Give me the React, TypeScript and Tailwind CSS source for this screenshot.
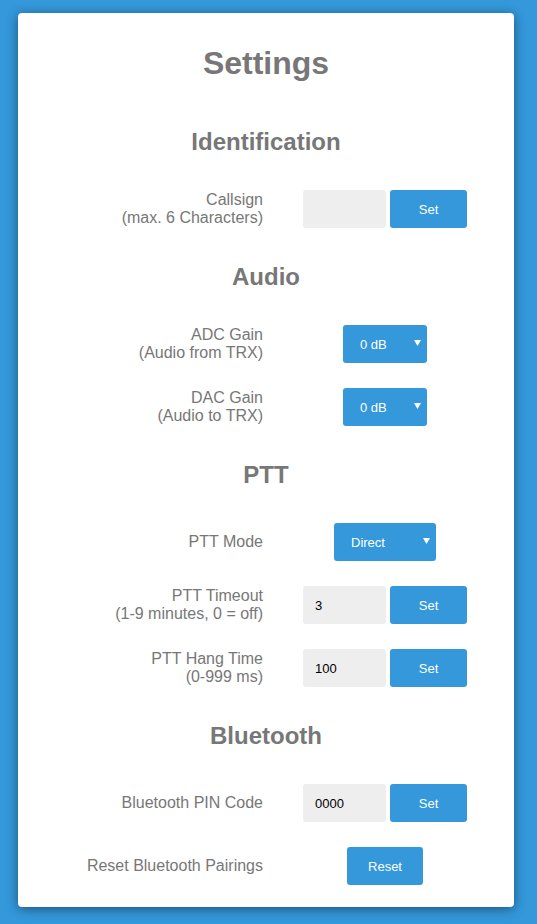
import React from "react";

const font = { fontFamily: '"Liberation Sans", Arial, sans-serif' };

function Label({ lines }: { lines: string[] }) {
  return (
    <div className="w-[245px] text-right text-[16px] leading-[18px] text-[#777]">
      {lines.map((l) => (
        <div key={l}>{l}</div>
      ))}
    </div>
  );
}

function InputSet({ value }: { value: string }) {
  return (
    <div className="flex gap-[4px]">
      <input
        defaultValue={value}
        className="h-[38px] w-[83px] rounded-[3px] bg-[#eeeeee] pl-[12px] pt-[1px] text-[13px] text-black outline-none"
      />
      <button className="h-[38px] w-[77px] rounded-[3px] bg-[#3498db] pt-[1px] text-[13px] text-white">
        Set
      </button>
    </div>
  );
}

function Select({ value, width }: { value: string; width: string }) {
  return (
    <div
      className={`flex h-[38px] items-center justify-between rounded-[3px] bg-[#3498db] pl-[17px] pr-[6px] pt-[1px] text-[13px] text-white ${width}`}
    >
      <span>{value}</span>
      <svg width="7" height="6" viewBox="0 0 7 6" className="mb-[4px]">
        <path d="M0 0 H7 L3.5 6 Z" fill="#fff" />
      </svg>
    </div>
  );
}

function Row({ label, children }: { label: string[]; children: React.ReactNode }) {
  return (
    <div className="flex h-[38px] items-center">
      <Label lines={label} />
      <div className="flex w-[244px] justify-center">{children}</div>
    </div>
  );
}

function Section({ title, children }: { title: string; children: React.ReactNode }) {
  return (
    <>
      <h2 className="mb-[34px] mt-[34px] pt-[1px] text-center text-[24px] font-bold leading-[28px] text-[#777]">
        {title}
      </h2>
      <div className="flex flex-col gap-[25px]">{children}</div>
    </>
  );
}

export default function App() {
  return (
    <div className="min-h-[924px] bg-[#3498db] pt-[13px]" style={font}>
      <div className="ml-[18px] w-[496px] rounded-[4px] bg-white pb-[22px] pt-[32px] shadow-[0_2px_12px_rgba(0,0,0,0.45)]">
        <h1 className="mb-[45px] text-center text-[32px] font-bold leading-[37px] text-[#777]">
          Settings
        </h1>

        <Section title="Identification">
          <Row label={["Callsign", "(max. 6 Characters)"]}>
            <InputSet value="" />
          </Row>
        </Section>

        <Section title="Audio">
          <Row label={["ADC Gain", "(Audio from TRX)"]}>
            <Select value="0 dB" width="w-[84px]" />
          </Row>
          <Row label={["DAC Gain", "(Audio to TRX)"]}>
            <Select value="0 dB" width="w-[84px]" />
          </Row>
        </Section>

        <Section title="PTT">
          <Row label={["PTT Mode"]}>
            <Select value="Direct" width="w-[102px]" />
          </Row>
          <Row label={["PTT Timeout", "(1-9 minutes, 0 = off)"]}>
            <InputSet value="3" />
          </Row>
          <Row label={["PTT Hang Time", "(0-999 ms)"]}>
            <InputSet value="100" />
          </Row>
        </Section>

        <Section title="Bluetooth">
          <Row label={["Bluetooth PIN Code"]}>
            <InputSet value="0000" />
          </Row>
          <Row label={["Reset Bluetooth Pairings"]}>
            <button className="h-[38px] w-[76px] rounded-[3px] bg-[#3498db] pt-[1px] text-[13px] text-white">
              Reset
            </button>
          </Row>
        </Section>
      </div>
    </div>
  );
}
